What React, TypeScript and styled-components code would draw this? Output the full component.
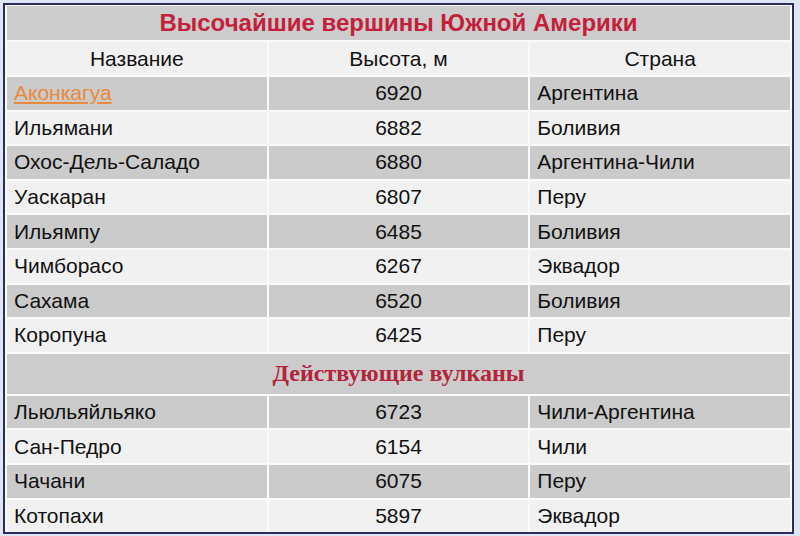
import styled, { createGlobalStyle } from "styled-components";

const GlobalStyle = createGlobalStyle`
  html, body {
    margin: 0;
    padding: 0;
    background: #dde6f2;
  }
  body {
    font-family: "Liberation Sans", Arial, sans-serif;
  }
`;

const Page = styled.div`
  width: 800px;
  height: 536px;
  padding: 3px;
  box-sizing: border-box;
  background: #dde6f2;
`;

const Frame = styled.div`
  width: 791px;
  height: 531px;
  box-sizing: border-box;
  border: 2px solid #2b2b5c;
  background: #fafafa;
  overflow: hidden;
`;

const Table = styled.table`
  width: 100%;
  table-layout: fixed;
  border-collapse: separate;
  border-spacing: 2px;
  margin: -1px 0 0 0;
`;

const TitleCell = styled.th<{ serif?: boolean }>`
  height: ${(p) => (p.serif ? "40px" : "34px")};
  padding: 0;
  background: #cccccc;
  color: ${(p) => (p.serif ? "#b3243a" : "#c4203a")};
  font-family: ${(p) =>
    p.serif ? `"Liberation Serif", "Times New Roman", serif` : `"Liberation Sans", Arial, sans-serif`};
  font-size: ${(p) => (p.serif ? "24px" : "24px")};
  font-weight: bold;
  text-align: center;
  vertical-align: middle;
`;

const HeadCell = styled.th`
  height: 33px;
  padding: 0;
  background: #f1f1f1;
  font-weight: normal;
  font-size: 21px;
  color: #111;
  text-align: center;
`;

const Cell = styled.td<{ shade: boolean; center?: boolean }>`
  height: 32.6px;
  padding: 0 7px;
  background: ${(p) => (p.shade ? "#cbcbcb" : "#f1f1f1")};
  font-size: 21px;
  color: #111;
  text-align: ${(p) => (p.center ? "center" : "left")};
  white-space: nowrap;
  overflow: hidden;
`;

const PeakLink = styled.a`
  color: #e8893c;
  text-decoration: underline;
`;

type Row = { name: string; height: number; country: string; link?: boolean };

const peaks: Row[] = [
  { name: "Аконкагуа", height: 6920, country: "Аргентина", link: true },
  { name: "Ильямани", height: 6882, country: "Боливия" },
  { name: "Охос-Дель-Саладо", height: 6880, country: "Аргентина-Чили" },
  { name: "Уаскаран", height: 6807, country: "Перу" },
  { name: "Ильямпу", height: 6485, country: "Боливия" },
  { name: "Чимборасо", height: 6267, country: "Эквадор" },
  { name: "Сахама", height: 6520, country: "Боливия" },
  { name: "Коропуна", height: 6425, country: "Перу" },
];

const volcanoes: Row[] = [
  { name: "Льюльяйльяко", height: 6723, country: "Чили-Аргентина" },
  { name: "Сан-Педро", height: 6154, country: "Чили" },
  { name: "Чачани", height: 6075, country: "Перу" },
  { name: "Котопахи", height: 5897, country: "Эквадор" },
];

const DataRow = ({ row, shade }: { row: Row; shade: boolean }) => (
  <tr>
    <Cell shade={shade}>
      {row.link ? <PeakLink href="#">{row.name}</PeakLink> : row.name}
    </Cell>
    <Cell shade={shade} center>
      {row.height}
    </Cell>
    <Cell shade={shade}>{row.country}</Cell>
  </tr>
);

export default function App() {
  return (
    <>
      <GlobalStyle />
      <Page>
        <Frame>
          <Table>
            <tbody>
              <tr>
                <TitleCell colSpan={3}>Высочайшие вершины Южной Америки</TitleCell>
              </tr>
              <tr>
                <HeadCell>Название</HeadCell>
                <HeadCell>Высота, м</HeadCell>
                <HeadCell>Страна</HeadCell>
              </tr>
              {peaks.map((r, i) => (
                <DataRow key={r.name} row={r} shade={i % 2 === 0} />
              ))}
              <tr>
                <TitleCell colSpan={3} serif>
                  Действующие вулканы
                </TitleCell>
              </tr>
              {volcanoes.map((r, i) => (
                <DataRow key={r.name} row={r} shade={i % 2 === 0} />
              ))}
            </tbody>
          </Table>
        </Frame>
      </Page>
    </>
  );
}
